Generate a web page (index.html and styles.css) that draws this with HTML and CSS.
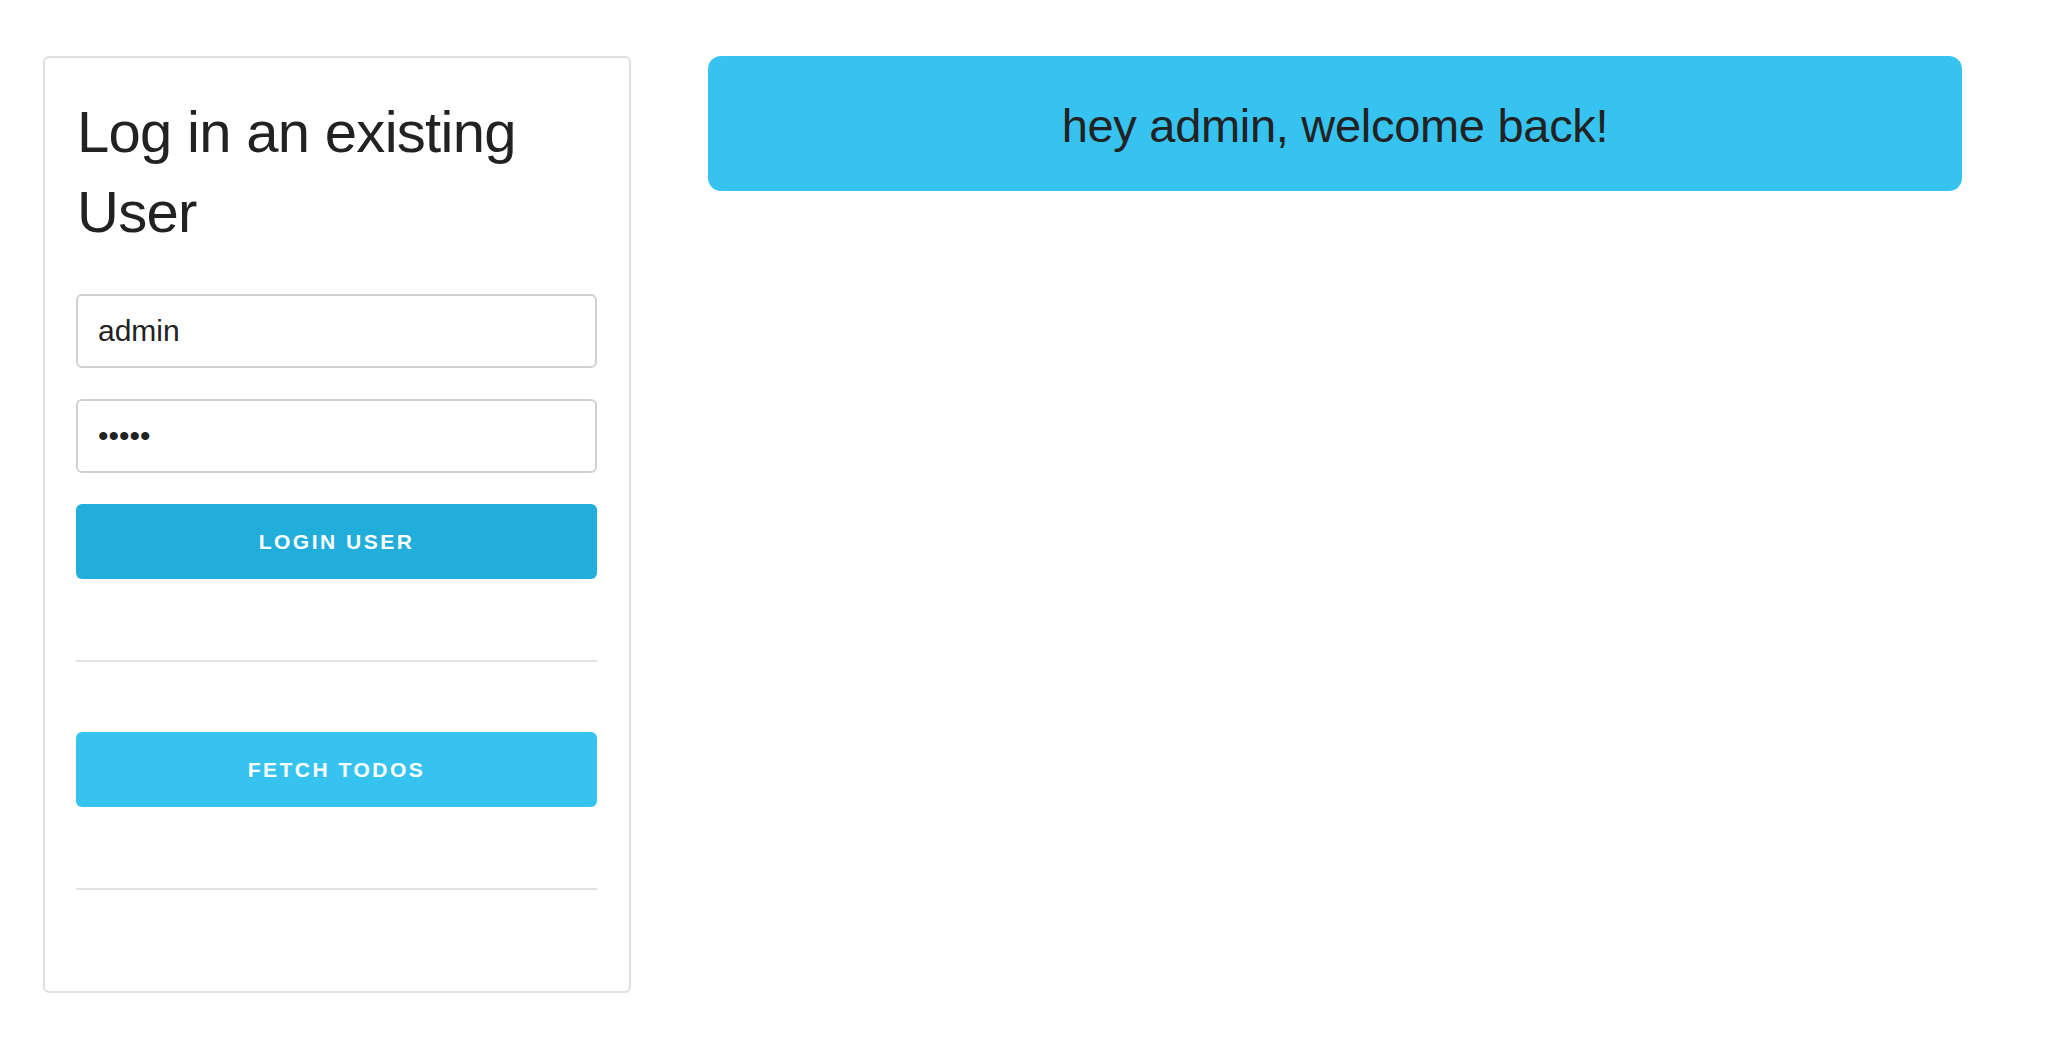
FILE: index.html
```html
<!DOCTYPE html>
<html>
<head>
<meta charset="utf-8">
<link rel="stylesheet" href="styles.css">
</head>
<body>
<div class="page">
  <div class="card">
    <h3 class="title">Log in an existing User</h3>
    <input class="field" type="text" value="admin">
    <input class="field" type="password" value="admin">
    <button class="btn btn-dark">LOGIN USER</button>
    <hr class="rule rule-first">
    <button class="btn btn-light">FETCH TODOS</button>
    <hr class="rule rule-second">
  </div>
  <div class="banner">hey admin, welcome back!</div>
</div>
</body>
</html>
```

FILE: styles.css
```css
html, body {
  margin: 0;
  padding: 0;
  background: #ffffff;
}
body {
  font-family: "Liberation Sans", Arial, sans-serif;
  color: #222222;
}
.page {
  display: flex;
  align-items: flex-start;
  gap: 77px;
  padding: 56px 0 0 43px;
}
.card {
  box-sizing: border-box;
  width: 588px;
  height: 937px;
  border: 2px solid #e0e0e0;
  border-radius: 6px;
  padding: 34px 32px 0 31px;
  display: flex;
  flex-direction: column;
}
.title {
  margin: 0 0 0 1px;
  font-size: 58px;
  font-weight: normal;
  line-height: 80px;
  letter-spacing: -0.7px;
  color: #222222;
}
.field {
  box-sizing: border-box;
  width: 521px;
  height: 74px;
  border: 2px solid #d0d0d0;
  border-radius: 6px;
  padding: 0 20px;
  font-family: "Liberation Sans", Arial, sans-serif;
  font-size: 30px;
  color: #222222;
  margin-top: 31px;
  outline: none;
}
.title + .field {
  margin-top: 42px;
}
.btn {
  box-sizing: border-box;
  width: 521px;
  height: 75px;
  border: none;
  border-radius: 6px;
  color: #ffffff;
  font-family: "Liberation Sans", Arial, sans-serif;
  font-weight: bold;
  font-size: 21px;
  letter-spacing: 2.5px;
  padding: 0;
}
.btn-dark {
  background: #21aedb;
  margin-top: 31px;
}
.btn-light {
  background: #36c3f0;
  margin-top: 70px;
}
.rule {
  width: 521px;
  border: none;
  border-top: 2px solid #e2e2e2;
  margin: 0;
}
.rule-first {
  margin-top: 81px;
}
.rule-second {
  margin-top: 81px;
}
.banner {
  box-sizing: border-box;
  width: 1254px;
  height: 135px;
  background: #36c3f0;
  border-radius: 13px;
  display: flex;
  align-items: center;
  justify-content: center;
  font-size: 47px;
  letter-spacing: -0.3px;
  color: #222222;
  padding-top: 4px;
}
```
